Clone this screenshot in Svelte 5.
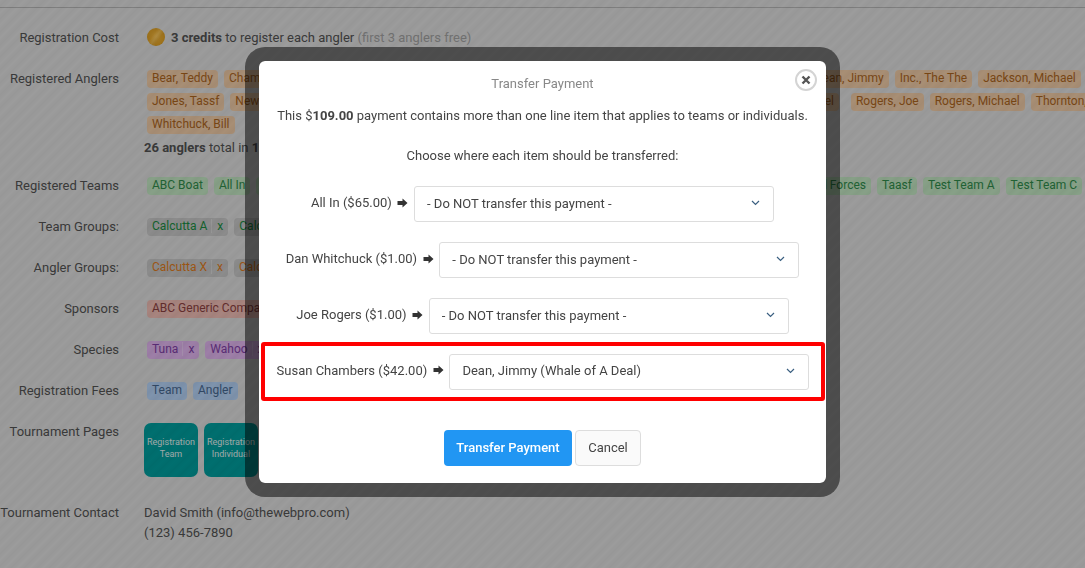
<script>
	const anglersTop = ['Bear, Teddy', 'Chambers, Susan', 'Chen, Wei', 'Clark, Amy', 'Cole, Ryan', 'Davis, Ron', 'Fisher, Thomas', 'Garcia, Manuel', 'Dean, Jimmy', 'Inc., The The', 'Jackson, Michael'];
	const anglersMid = ['Jones, Tassf', 'Newman, Paul', 'Nolan, Patrick', 'Owens, Kimberly', 'Parker, Daniel', 'Perez, Marcus', 'Quinn, Sam', 'Reed, Joel'];
	const anglersEnd = ['Rogers, Joe', 'Rogers, Michael', 'Thornton, Bill'];
	const teams = ['ABC Boat', 'All In', 'Big Fish', 'Blue Water', 'Reel Time', 'Sea Hunter', 'Salty Dogs', 'Marine', 'Hook, Line & Sinkers', 'Special Forces', 'Taasf', 'Test Team A', 'Test Team C'];
	const transfers = [
		{ label: 'All In ($65.00)', value: '- Do NOT transfer this payment -' },
		{ label: 'Dan Whitchuck ($1.00)', value: '- Do NOT transfer this payment -' },
		{ label: 'Joe Rogers ($1.00)', value: '- Do NOT transfer this payment -' },
		{ label: 'Susan Chambers ($42.00)', value: 'Dean, Jimmy (Whale of A Deal)', picked: true }
	];
</script>

<main class="page">
	<div class="row">
		<div class="label">Registration Cost</div>
		<div class="value cost">
			<span class="coin"></span>
			<span><strong>3 credits</strong> to register each angler <span class="muted">(first 3 anglers free)</span></span>
		</div>
	</div>

	<div class="row">
		<div class="label">Registered Anglers</div>
		<div class="value">
			<div class="tags">
				{#each anglersTop as name}
					<span class="tag orange">{name}</span>
				{/each}
				{#each anglersMid as name}
					<span class="tag orange">{name}</span>
				{/each}
				<span class="spacer"></span>
				{#each anglersEnd as name}
					<span class="tag orange">{name}</span>
				{/each}
				<span class="tag orange">Whitchuck, Bill</span>
			</div>
			<div class="total"><strong>26 anglers</strong> total in <strong>14 teams</strong></div>
		</div>
	</div>

	<div class="row">
		<div class="label">Registered Teams</div>
		<div class="value tags">
			{#each teams as name}
				<span class="tag green">{name}</span>
			{/each}
		</div>
	</div>

	<div class="row">
		<div class="label">Team Groups:</div>
		<div class="value tags">
			<span class="tag grey green-text">Calcutta A<i>x</i></span>
			<span class="tag grey green-text">Calcutta B<i>x</i></span>
		</div>
	</div>

	<div class="row">
		<div class="label">Angler Groups:</div>
		<div class="value tags">
			<span class="tag grey orange-text">Calcutta X<i>x</i></span>
			<span class="tag grey orange-text">Calcutta Y<i>x</i></span>
		</div>
	</div>

	<div class="row">
		<div class="label">Sponsors</div>
		<div class="value tags">
			<span class="tag red">ABC Generic Company</span>
		</div>
	</div>

	<div class="row">
		<div class="label">Species</div>
		<div class="value tags">
			<span class="tag purple">Tuna<i>x</i></span>
			<span class="tag purple">Wahoo<i>x</i></span>
		</div>
	</div>

	<div class="row">
		<div class="label">Registration Fees</div>
		<div class="value tags">
			<span class="tag blue">Team</span>
			<span class="tag blue">Angler</span>
		</div>
	</div>

	<div class="row">
		<div class="label">Tournament Pages</div>
		<div class="value pages">
			<span class="page-tile">Registration<br />Team</span>
			<span class="page-tile">Registration<br />Individual</span>
		</div>
	</div>

	<div class="row">
		<div class="label">Tournament Contact</div>
		<div class="value contact">David Smith (info@thewebpro.com)<br />(123) 456-7890</div>
	</div>
</main>

<div class="overlay">
	<div class="modal">
		<button class="close" aria-label="Close">
			<svg viewBox="0 0 10 10" width="10" height="10"><path d="M1.5 1.5l7 7M8.5 1.5l-7 7" stroke="#555" stroke-width="2.4" fill="none" /></svg>
		</button>
		<h2>Transfer Payment</h2>
		<p class="intro">This $<strong>109.00</strong> payment contains more than one line item that applies to teams or individuals.</p>
		<p class="choose">Choose where each item should be transferred:</p>

		<div class="transfers">
			{#each transfers as t}
				<div class="transfer" class:picked={t.picked}>
					<span class="who">{t.label}</span>
					<svg class="arrow" viewBox="0 0 11 10" width="11" height="10"><path d="M0.5 3H5.5V0.5L10.5 5L5.5 9.5V7H0.5Z" fill="#333" /></svg>
					<div class="select">
						<span>{t.value}</span>
						<svg viewBox="0 0 9 6" width="9" height="6"><path d="M1 1l3.5 3.5L8 1" stroke="#3a5f80" stroke-width="1.2" fill="none" /></svg>
					</div>
				</div>
			{/each}
		</div>

		<div class="actions">
			<button class="primary">Transfer Payment</button>
			<button class="cancel">Cancel</button>
		</div>
	</div>
</div>

<style>
	:global(body) {
		background: #dbdbdb;
		overflow: hidden;
		font-family: Roboto, sans-serif;
	}

	.page {
		width: 1140px;
		height: 561px;
		box-sizing: border-box;
		border-top: 1px solid #b2b2b2;
		margin-top: 7px;
		padding-top: 21px;
		font-size: 13px;
		line-height: 18px;
		color: #525252;
		overflow: hidden;
	}

	.row {
		display: grid;
		grid-template-columns: 119px 1fr;
		column-gap: 28px;
		margin-bottom: 23px;
	}

	.label {
		text-align: right;
		white-space: nowrap;
	}

	.cost {
		display: flex;
		align-items: center;
		gap: 6px;
		height: 18px;
	}

	.coin {
		width: 18px;
		height: 18px;
		margin-top: -3px;
		border-radius: 50%;
		background:
			linear-gradient(125deg, transparent 35%, rgba(255, 225, 150, 0.3) 50%, transparent 65%),
			radial-gradient(circle at 50% 45%, #f0b540, #dd9f24 65%, #b58018);
	}

	.muted {
		color: #a0a0a0;
	}

	.tags {
		display: flex;
		flex-wrap: wrap;
		gap: 5px 6px;
	}

	.spacer {
		width: 0;
	}

	.tag {
		height: 18px;
		padding: 0 5px;
		border-radius: 4px;
		font-size: 12px;
		line-height: 17px;
		white-space: nowrap;
	}

	.tag i {
		font-style: normal;
		margin-left: 4px;
		padding-left: 5px;
		border-left: 1px solid rgba(255, 255, 255, 0.25);
	}

	.orange { background: #ecc8a4; color: #aa641e; }
	.green { background: #bee1be; color: #2f8a4a; }
	.grey { background: #c4c4c4; }
	.green-text { color: #1a8a40; }
	.orange-text { color: #dc7a1c; }
	.red { background: #ebbab2; color: #8a4040; }
	.purple { background: #ddb2eb; color: #7f40a5; }
	.blue { background: #b2cff3; color: #47678f; }

	.total {
		margin: 5px 0 -3px -3px;
	}

	.pages {
		display: flex;
		gap: 6px;
		margin: 0 0 4px -3px;
	}

	.page-tile {
		width: 54px;
		height: 54px;
		box-sizing: border-box;
		padding-top: 13px;
		border-radius: 7px;
		background: #009c9c;
		color: #e0eeee;
		font-size: 9px;
		line-height: 12px;
		text-align: center;
		white-space: nowrap;
	}

	.contact {
		margin: -1px 0 0 -3px;
		line-height: 20px;
	}

	.overlay {
		position: fixed;
		inset: 0;
		display: flex;
		justify-content: center;
		align-items: flex-start;
		padding-top: 47px;
		box-sizing: border-box;
		background: repeating-linear-gradient(135deg, rgba(0, 0, 0, 0.285) 0, rgba(0, 0, 0, 0.31) 4.5px, rgba(0, 0, 0, 0.285) 9px);
	}

	.modal {
		position: relative;
		width: 567px;
		height: 422px;
		border: 14px solid rgba(0, 0, 0, 0.5);
		border-radius: 20px;
		background: #fff;
		background-clip: padding-box;
		font-size: 13px;
		color: #444;
		text-align: center;
	}

	.close {
		position: absolute;
		top: 8px;
		right: 9px;
		width: 22px;
		height: 22px;
		padding: 0;
		display: flex;
		align-items: center;
		justify-content: center;
		background: #fff;
		border: 2px solid #d4d4d4;
		border-radius: 50%;
	}

	h2 {
		margin: 0;
		padding-top: 14px;
		font-size: 13px;
		font-weight: 400;
		line-height: 18px;
		color: #888;
	}

	.intro {
		margin: 14px 0 0;
		line-height: 18px;
	}

	.choose {
		margin: 22px 0 0;
		line-height: 18px;
	}

	.transfers {
		margin-top: 21px;
		display: flex;
		flex-direction: column;
		gap: 20px;
	}

	.transfer {
		display: flex;
		justify-content: center;
		align-items: center;
		gap: 5.6px;
		height: 36px;
	}

	.who, .arrow {
		margin-bottom: 3px;
	}

	.transfer.picked {
		box-sizing: border-box;
		width: 564px;
		height: 59px;
		margin: -12px 0 -11px 2px;
		border: 4px solid #f00;
		border-radius: 3px;
	}

	.select {
		box-sizing: border-box;
		width: 360px;
		height: 36px;
		padding: 0 13px 2px 12px;
		display: flex;
		align-items: center;
		justify-content: space-between;
		border: 1px solid #ddd;
		border-radius: 3px;
		text-align: left;
	}

	.actions {
		margin-top: 40px;
		display: flex;
		justify-content: center;
		gap: 3px;
	}

	button {
		font-family: inherit;
	}

	.primary, .cancel {
		height: 36px;
		padding: 0 0 2px;
		font-size: 13px;
		border-radius: 4px;
	}

	.primary {
		width: 128px;
		border: 0;
		background: #2196f3;
		color: #fff;
		font-weight: 500;
	}

	.cancel {
		width: 66px;
		border: 1px solid #ddd;
		background: #fafafa;
		color: #444;
	}
</style>
